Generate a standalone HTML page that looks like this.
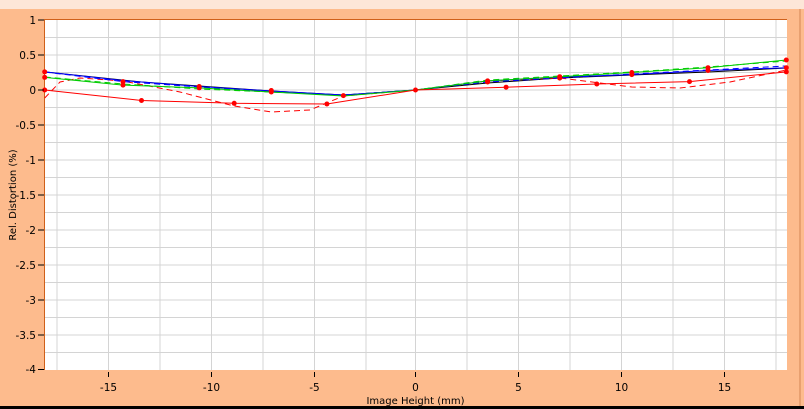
<!DOCTYPE html>
<html><head><meta charset="utf-8"><style>
html,body{margin:0;padding:0;width:804px;height:409px;overflow:hidden;background:#fdbb8d;}
svg{display:block}
text{font-family:"DejaVu Sans","Liberation Sans",sans-serif;font-size:10.5px;fill:#000}
</style></head><body>
<svg width="804" height="409" viewBox="0 0 804 409">
<rect x="0" y="0" width="804" height="409" fill="#fdbb8d"/>
<rect x="0" y="0" width="804" height="9" fill="#fde6d8"/>
<rect x="0" y="406" width="804" height="3" fill="#000"/>
<rect x="799" y="9" width="2" height="397" fill="#e8a070"/>
<rect x="44" y="19" width="743" height="351" fill="#fff"/>
<g stroke="#d4d4d4" stroke-width="1">
<line x1="57" y1="19" x2="57" y2="370"/><line x1="108.5" y1="19" x2="108.5" y2="370"/>
<line x1="160" y1="19" x2="160" y2="370"/><line x1="211.5" y1="19" x2="211.5" y2="370"/>
<line x1="263" y1="19" x2="263" y2="370"/><line x1="314.5" y1="19" x2="314.5" y2="370"/>
<line x1="366" y1="19" x2="366" y2="370"/><line x1="415.5" y1="19" x2="415.5" y2="370"/>
<line x1="467" y1="19" x2="467" y2="370"/><line x1="518.5" y1="19" x2="518.5" y2="370"/>
<line x1="570" y1="19" x2="570" y2="370"/><line x1="621.5" y1="19" x2="621.5" y2="370"/>
<line x1="673" y1="19" x2="673" y2="370"/><line x1="724.5" y1="19" x2="724.5" y2="370"/>
<line x1="776" y1="19" x2="776" y2="370"/>
<line x1="44" y1="37.5" x2="787" y2="37.5"/><line x1="44" y1="55" x2="787" y2="55"/><line x1="44" y1="72.5" x2="787" y2="72.5"/>
<line x1="44" y1="90" x2="787" y2="90"/><line x1="44" y1="107.5" x2="787" y2="107.5"/><line x1="44" y1="125" x2="787" y2="125"/>
<line x1="44" y1="142.5" x2="787" y2="142.5"/><line x1="44" y1="160" x2="787" y2="160"/><line x1="44" y1="177.5" x2="787" y2="177.5"/>
<line x1="44" y1="195" x2="787" y2="195"/><line x1="44" y1="212.5" x2="787" y2="212.5"/><line x1="44" y1="230" x2="787" y2="230"/>
<line x1="44" y1="247.5" x2="787" y2="247.5"/><line x1="44" y1="265" x2="787" y2="265"/><line x1="44" y1="282.5" x2="787" y2="282.5"/>
<line x1="44" y1="300" x2="787" y2="300"/><line x1="44" y1="317.5" x2="787" y2="317.5"/><line x1="44" y1="335" x2="787" y2="335"/>
<line x1="44" y1="352.5" x2="787" y2="352.5"/>
</g>
<line x1="44.5" y1="19" x2="44.5" y2="370" stroke="#d0601a" stroke-width="1"/>
<line x1="44" y1="19.5" x2="787" y2="19.5" stroke="#d0601a" stroke-width="1"/>
<g fill="none" stroke-width="1">
<polyline stroke="#000" points="44.7,71.9 141.5,82 271.3,91 343.4,95 415.5,90 487.6,83 559.7,78 631.8,75 708,72 786.3,68"/>
<polyline stroke="#f00" stroke-dasharray="6,4" points="44.7,98 60,82 80,78 123,81 180,92 234.2,106 271.3,112 310,110 343.4,96 415.5,90 487.6,81 559.7,78 600,83 631.8,87 680,88 730,82 786.3,70"/>
<polyline stroke="#00f" stroke-dasharray="6,4" points="44.7,72 123,81.6 199.2,87 271.3,92 343.4,95 415.5,90 487.6,82 559.7,78 631.8,74 708,70 786.3,66"/>
<polyline stroke="#0c0" stroke-dasharray="6,4" points="44.7,77 123,84 199.2,89 271.3,92 343.4,95 415.5,90 487.6,80 559.7,76 631.8,72 708,67 786.3,61"/>
<polyline stroke="#00f" points="44.7,71.9 123,80.5 199.2,86.5 271.3,91 343.4,95 415.5,90 487.6,81 559.7,77 631.8,74.6 708,70.5 786.3,67.7"/>
<polyline stroke="#0c0" points="44.7,77.4 123,85.1 199.2,87.9 271.3,92 343.4,96 415.5,90 487.6,80.9 559.7,76.7 631.8,72.5 708,67.7 786.3,60"/>
<polyline stroke="#f00" points="44.7,90 141.5,100.5 234.2,103.3 326.9,104 415.5,90 506.1,87.2 596.8,84 689.5,81.6 786.3,71.9"/>
</g>
<g fill="#f00">
<circle cx="44.7" cy="71.9" r="2.5"/><circle cx="44.7" cy="77.4" r="2.5"/><circle cx="44.7" cy="90" r="2.5"/>
<circle cx="123" cy="81.6" r="2.5"/><circle cx="123" cy="85.1" r="2.5"/><circle cx="141.5" cy="100.5" r="2.5"/>
<circle cx="199.2" cy="86.5" r="2.5"/><circle cx="199.2" cy="87.9" r="2.5"/><circle cx="234.2" cy="103.3" r="2.5"/>
<circle cx="271.3" cy="90.5" r="2.5"/><circle cx="271.3" cy="92" r="2.5"/><circle cx="326.9" cy="104" r="2.5"/>
<circle cx="343.4" cy="95.6" r="2.5"/><circle cx="415.5" cy="90" r="2.5"/>
<circle cx="487.6" cy="80.9" r="2.5"/><circle cx="487.6" cy="82" r="2.5"/><circle cx="506.1" cy="87.2" r="2.5"/>
<circle cx="559.7" cy="76.7" r="2.5"/><circle cx="559.7" cy="78.1" r="2.5"/><circle cx="596.8" cy="84" r="2.5"/>
<circle cx="631.8" cy="72.5" r="2.5"/><circle cx="631.8" cy="74.6" r="2.5"/><circle cx="689.5" cy="81.6" r="2.5"/>
<circle cx="708" cy="67.7" r="2.5"/><circle cx="708" cy="70.5" r="2.5"/>
<circle cx="786.3" cy="60" r="2.5"/><circle cx="786.3" cy="67.7" r="2.5"/><circle cx="786.3" cy="71.9" r="2.5"/>
</g>
<g stroke="#000" stroke-width="1">
<line x1="38" y1="20" x2="44" y2="20"/><line x1="38" y1="55" x2="44" y2="55"/><line x1="38" y1="90" x2="44" y2="90"/>
<line x1="38" y1="125" x2="44" y2="125"/><line x1="38" y1="160" x2="44" y2="160"/><line x1="38" y1="195" x2="44" y2="195"/>
<line x1="38" y1="230" x2="44" y2="230"/><line x1="38" y1="265" x2="44" y2="265"/><line x1="38" y1="300" x2="44" y2="300"/>
<line x1="38" y1="335" x2="44" y2="335"/><line x1="38" y1="369.5" x2="44" y2="369.5"/>
<line x1="108.5" y1="372" x2="108.5" y2="377"/><line x1="211.5" y1="372" x2="211.5" y2="377"/><line x1="314.5" y1="372" x2="314.5" y2="377"/>
<line x1="415.5" y1="372" x2="415.5" y2="377"/><line x1="518.5" y1="372" x2="518.5" y2="377"/><line x1="621.5" y1="372" x2="621.5" y2="377"/>
<line x1="724.5" y1="372" x2="724.5" y2="377"/>
</g>
<g text-anchor="end">
<text x="36" y="24">1</text><text x="36" y="59">0.5</text><text x="36" y="94">0</text><text x="36" y="129">-0.5</text>
<text x="36" y="164">-1</text><text x="36" y="199">-1.5</text><text x="36" y="234">-2</text><text x="36" y="269">-2.5</text>
<text x="36" y="304">-3</text><text x="36" y="339">-3.5</text><text x="36" y="373">-4</text>
</g>
<g text-anchor="middle">
<text x="108.5" y="391">-15</text><text x="211.5" y="391">-10</text><text x="314.5" y="391">-5</text>
<text x="415.5" y="391">0</text><text x="518.5" y="391">5</text><text x="621.5" y="391">10</text><text x="724.5" y="391">15</text>
<text x="415.5" y="404" style="font-size:10px">Image Height (mm)</text>
<text transform="translate(16,195) rotate(-90)" style="font-size:10px">Rel. Distortion (%)</text>
</g>
</svg>
</body></html>
